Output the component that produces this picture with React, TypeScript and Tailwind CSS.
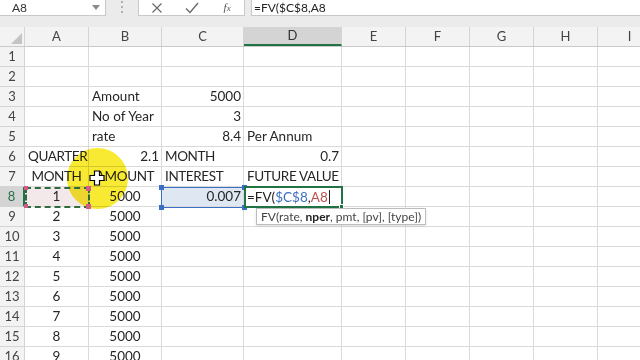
import React from "react";

type Cell = { t?: React.ReactNode; a?: "l" | "c" | "r"; n?: boolean };

const colW = ["w-[64px]", "w-[73px]", "w-[82px]", "w-[98px]", "w-[64px]", "w-[64px]", "w-[64px]", "w-[64px]", "w-[64px]"];
const letters = ["A", "B", "C", "D", "E", "F", "G", "H", "I"];

const rows: Record<number, Cell[]> = {
  3: [{}, { t: "Amount", a: "l" }, { t: "5000", a: "r" }],
  4: [{}, { t: "No of Year", a: "l" }, { t: "3", a: "r" }],
  5: [{}, { t: "rate", a: "l" }, { t: "8.4", a: "r" }, { t: "Per Annum", a: "l" }],
  6: [{ t: "QUARTER", a: "l", n: true }, { t: "2.1", a: "r" }, { t: "MONTH", a: "l", n: true }, { t: "0.7", a: "r" }],
  7: [
    { t: "MONTH", a: "c", n: true },
    { t: "AMOUNT", a: "c", n: true },
    { t: "INTEREST", a: "l", n: true },
    { t: "FUTURE VALUE", a: "l", n: true },
  ],
  8: [{ t: "1", a: "c" }, { t: "5000", a: "c" }, { t: "0.007", a: "r" }, {}],
  9: [{ t: "2", a: "c" }, { t: "5000", a: "c" }],
  10: [{ t: "3", a: "c" }, { t: "5000", a: "c" }],
  11: [{ t: "4", a: "c" }, { t: "5000", a: "c" }],
  12: [{ t: "5", a: "c" }, { t: "5000", a: "c" }],
  13: [{ t: "6", a: "c" }, { t: "5000", a: "c" }],
  14: [{ t: "7", a: "c" }, { t: "5000", a: "c" }],
  15: [{ t: "8", a: "c" }, { t: "5000", a: "c" }],
  16: [{ t: "9", a: "c" }, { t: "5000", a: "c" }],
};

const alignCls = (a?: string) =>
  a === "r" ? "justify-end pr-[2px]" : a === "c" ? "justify-center" : "justify-start pl-[3px]";

export default function App() {
  const rowNums = Array.from({ length: 16 }, (_, i) => i + 1);
  return (
    <div
      className="relative w-[640px] h-[360px] overflow-hidden bg-white text-[#262626]"
      style={{ fontFamily: "Lato, 'Open Sans', sans-serif" }}
    >
      {/* Formula bar */}
      <div className="h-[27px] bg-[#ebebeb] flex items-start">
        <div className="w-[106px] h-[16px] bg-white border-r border-b border-[#c8c8c8] flex items-center justify-between pl-[12px] pr-[5px]">
          <span className="text-[12px] leading-none text-[#333]">A8</span>
          <svg width="8" height="5" viewBox="0 0 8 5">
            <path d="M0 0 L8 0 L4 5 Z" fill="#8a8a8a" />
          </svg>
        </div>
        <div className="w-[32px] h-[16px] flex flex-col items-center justify-start gap-[3px] pt-[1px]">
          <div className="w-[2px] h-[2px] bg-[#b0b0b0]" />
          <div className="w-[2px] h-[2px] bg-[#b0b0b0]" />
          <div className="w-[2px] h-[2px] bg-[#b0b0b0]" />
        </div>
        <div className="w-[107px] h-[16px] bg-white border-x border-b border-[#c8c8c8] flex items-center">
          <div className="w-[36px] flex justify-center">
            <svg width="12" height="12" viewBox="0 0 12 12">
              <path d="M1.5 1.5 L10.5 10.5 M10.5 1.5 L1.5 10.5" stroke="#6a6a6a" strokeWidth="1.2" />
            </svg>
          </div>
          <div className="w-[36px] flex justify-center">
            <svg width="14" height="12" viewBox="0 0 14 12">
              <path d="M1 6.5 L5 10.5 L13 1" stroke="#6a6a6a" strokeWidth="1.4" fill="none" />
            </svg>
          </div>
          <div className="w-[34px] flex justify-center">
            <span className="text-[11px] italic leading-none text-[#555]" style={{ fontFamily: "'Liberation Serif', serif" }}>
              f<span className="text-[9px]">x</span>
            </span>
          </div>
        </div>
        <div className="w-[6px]" />
        <div className="flex-1 h-[16px] bg-white border-l border-b border-[#c8c8c8] flex items-center pl-[2px]">
          <span className="text-[12px] leading-none text-[#222]">=FV($C$8,A8</span>
        </div>
      </div>

      {/* Grid */}
      <div className="relative">
        {/* Column header row */}
        <div className="flex h-[20px] bg-[#f3f3f3] border-b border-[#c9c9c9]">
          <div className="w-[25px] shrink-0 relative border-r border-[#d4d4d4]">
            <svg className="absolute right-[2px] bottom-[2px]" width="11" height="11" viewBox="0 0 11 11">
              <path d="M11 0 L11 11 L0 11 Z" fill="#c4c4c4" />
            </svg>
          </div>
          {letters.map((l, i) => (
            <div
              key={l}
              className={`${colW[i]} shrink-0 flex items-center justify-center text-[13px] border-r border-[#d4d4d4] ${
                l === "D" ? "bg-[#d4d4d4] border-b-2 border-b-[#217346] text-[#333]" : "text-[#444]"
              }`}
            >
              {l}
            </div>
          ))}
        </div>

        {rowNums.map((r) => {
          const cells = rows[r] || [];
          return (
            <div key={r} className="flex h-[20px]">
              <div
                className={`w-[25px] shrink-0 flex items-center justify-center text-[13px] border-b border-r border-[#d4d4d4] ${
                  r === 8 ? "bg-[#d4d4d4] border-r-2 border-r-[#217346] text-[#217346]" : "bg-[#f3f3f3] text-[#444]"
                }`}
              >
                {r}
              </div>
              {letters.map((l, i) => {
                const c = cells[i] || {};
                let bg = "";
                if (r === 8 && i === 0) bg = "bg-[#f3e9ea]";
                if (r === 8 && i === 2) bg = "bg-[#dfe7f2]";
                return (
                  <div
                    key={l}
                    className={`${colW[i]} shrink-0 flex items-center whitespace-nowrap overflow-visible text-[13.5px] border-b border-r border-[#dadada] ${alignCls(c.a)} ${bg} ${
                      c.n ? "tracking-[-0.4px]" : ""
                    }`}
                  >
                    {c.t}
                  </div>
                );
              })}
            </div>
          );
        })}

        {/* Yellow highlight circle */}
        <div className="absolute left-[67px] top-[121px] w-[61px] h-[61px] rounded-full bg-[#f8e71c] opacity-90 mix-blend-multiply pointer-events-none" />

        {/* A8 copy marquee */}
        <div className="absolute left-[25px] top-[160px] w-[65px] h-[21px] border-2 border-dashed border-[#2f6b3e] pointer-events-none" />
        <div className="absolute left-[24px] top-[159px] w-[4px] h-[4px] bg-[#d25a87]" />
        <div className="absolute left-[86px] top-[159px] w-[5px] h-[5px] bg-[#d25a87]" />
        <div className="absolute left-[86px] top-[177px] w-[5px] h-[5px] bg-[#d25a87]" />
        <div className="absolute left-[24px] top-[177px] w-[4px] h-[4px] bg-[#d25a87]" />

        {/* C8 reference box */}
        <div className="absolute left-[161px] top-[160px] w-[84px] h-[21px] border-[1.5px] border-[#3a6fc4] pointer-events-none" />
        <div className="absolute left-[159px] top-[158px] w-[5px] h-[5px] bg-[#3a6fc4]" />
        <div className="absolute left-[242px] top-[158px] w-[5px] h-[5px] bg-[#3a6fc4]" />
        <div className="absolute left-[159px] top-[178px] w-[5px] h-[5px] bg-[#3a6fc4]" />
        <div className="absolute left-[242px] top-[178px] w-[5px] h-[5px] bg-[#3a6fc4]" />

        {/* D8 edit cell */}
        <div className="absolute left-[244px] top-[159px] w-[99px] h-[22px] border-2 border-[#217346] bg-white flex items-center pl-[1px] text-[13.5px] whitespace-nowrap">
          <span className="text-[#222]">=FV(</span>
          <span className="text-[#3c6fc2]">$C$8</span>
          <span className="text-[#222]">,</span>
          <span className="text-[#c0504d]">A8</span>
          <span className="inline-block w-[1px] h-[14px] bg-[#222] ml-[1px]" />
        </div>
        <div className="absolute left-[339px] top-[177px] w-[5px] h-[5px] bg-[#217346] border border-white" />

        {/* Tooltip */}
        <div className="absolute left-[256px] top-[181px] h-[17px] px-[4px] bg-white border border-[#bdbdbd] shadow-sm flex items-center text-[12px] text-[#444] whitespace-nowrap">
          FV(rate,&nbsp;<span className="font-bold text-[#222]">nper</span>, pmt, [pv], [type])
        </div>

        {/* Cursor */}
        <svg className="absolute left-[89px] top-[143px]" width="16" height="16" viewBox="0 0 16 16">
          <path
            d="M5.5 1 H10.5 V5.5 H15 V10.5 H10.5 V15 H5.5 V10.5 H1 V5.5 H5.5 Z"
            fill="white"
            stroke="black"
            strokeWidth="1.2"
          />
        </svg>
      </div>
    </div>
  );
}
